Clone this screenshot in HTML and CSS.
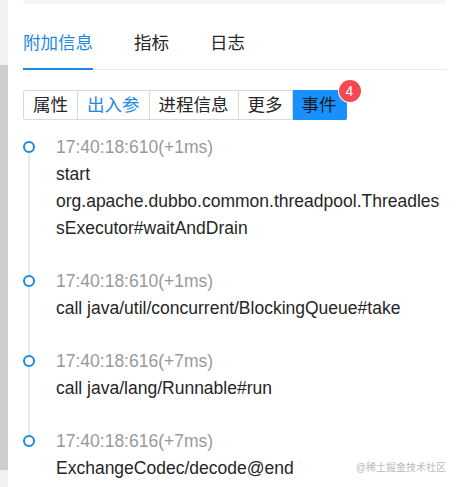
FILE: index.html
```html
<!DOCTYPE html>
<html lang="zh">
<head>
  <meta charset="UTF-8">
  <title>调用详情</title>
  <link rel="stylesheet" href="styles.css">
</head>
<body>
  <div class="page">
    <div class="scrollbar"><div class="scroll-thumb"></div></div>
    <div class="panel">
      <div class="top-card"></div>
      <div class="tabs">
        <div class="tab active">附加信息</div>
        <div class="tab">指标</div>
        <div class="tab">日志</div>
      </div>
      <div class="btn-group">
        <button class="seg-btn">属性</button>
        <button class="seg-btn hover">出入参</button>
        <button class="seg-btn">进程信息</button>
        <button class="seg-btn">更多</button>
        <button class="seg-btn selected">事件<span class="badge">4</span></button>
      </div>
      <ul class="timeline">
        <li class="tl-item">
          <div class="tl-rail"><span class="tl-dot"></span><span class="tl-tail"></span></div>
          <div class="tl-content">
            <div class="tl-time">17:40:18:610(+1ms)</div>
            <div class="tl-text">start org.apache.dubbo.common.threadpool.ThreadlessExecutor#waitAndDrain</div>
          </div>
        </li>
        <li class="tl-item">
          <div class="tl-rail"><span class="tl-dot"></span><span class="tl-tail"></span></div>
          <div class="tl-content">
            <div class="tl-time">17:40:18:610(+1ms)</div>
            <div class="tl-text">call java/util/concurrent/BlockingQueue#take</div>
          </div>
        </li>
        <li class="tl-item">
          <div class="tl-rail"><span class="tl-dot"></span><span class="tl-tail"></span></div>
          <div class="tl-content">
            <div class="tl-time">17:40:18:616(+7ms)</div>
            <div class="tl-text">call java/lang/Runnable#run</div>
          </div>
        </li>
        <li class="tl-item last">
          <div class="tl-rail"><span class="tl-dot"></span></div>
          <div class="tl-content">
            <div class="tl-time">17:40:18:616(+7ms)</div>
            <div class="tl-text">ExchangeCodec/decode@end</div>
          </div>
        </li>
      </ul>
      <div class="watermark">@稀土掘金技术社区</div>
    </div>
  </div>
</body>
</html>
```

FILE: styles.css
```css
body {
  margin: 0;
  background: #fff;
  font-family: 'Liberation Sans', 'Noto Sans CJK SC', Arial, sans-serif;
  color: #262626;
}
.page {
  display: flex;
  height: 487px;
  overflow: hidden;
}
.scrollbar {
  width: 8px;
  flex-shrink: 0;
  background: #f1f1f1;
}
.scroll-thumb {
  margin-top: 65px;
  height: 405px;
  background: #cdcdcd;
}
.panel {
  position: relative;
  flex: 1;
  min-width: 0;
  margin: 0 14px 0 15px;
}
.top-card {
  height: 4px;
  background: #f4f4f4;
  border-radius: 0 0 3px 3px;
}
.tabs {
  display: flex;
  gap: 41px;
  padding-top: 27px;
  border-bottom: 1px solid #e8e8e8;
}
.tab {
  font-size: 17.5px;
  line-height: 24px;
  padding-bottom: 13px;
  border-bottom: 2px solid transparent;
  margin-bottom: -1px;
}
.tab.active {
  color: #1e88e5;
  border-bottom-color: #1e88e5;
}
.btn-group {
  display: flex;
  margin-top: 20px;
}
.seg-btn {
  position: relative;
  font-family: inherit;
  font-size: 17.5px;
  line-height: 28px;
  padding: 0 9px;
  background: #fff;
  color: #262626;
  border: 1px solid #d9d9d9;
  border-left: none;
  cursor: pointer;
}
.seg-btn:first-child {
  border-left: 1px solid #d9d9d9;
  border-radius: 2px 0 0 2px;
}
.seg-btn.hover {
  color: #1e88e5;
}
.seg-btn.selected {
  background: #1890ff;
  border-color: #1890ff;
  border-radius: 0 2px 2px 0;
  color: #1a1a1a;
}
.badge {
  position: absolute;
  top: -11px;
  right: -15px;
  width: 22px;
  height: 22px;
  border-radius: 50%;
  background: #f5474f;
  color: #fff;
  font-size: 14px;
  line-height: 22px;
  text-align: center;
  box-shadow: 0 0 0 1px #fff;
}
.timeline {
  list-style: none;
  margin: 14px 0 0;
  padding: 0;
}
.tl-item {
  display: flex;
}
.tl-rail {
  width: 12px;
  flex-shrink: 0;
  display: flex;
  flex-direction: column;
  align-items: center;
}
.tl-dot {
  margin-top: 7px;
  width: 8px;
  height: 8px;
  border: 2.5px solid #1e88e5;
  border-radius: 50%;
  background: #fff;
}
.tl-tail {
  flex: 1;
  width: 2px;
  background: #e8e8e8;
  margin-bottom: -7px;
}
.tl-content {
  flex: 1;
  min-width: 0;
  margin-left: 21px;
  padding: 0 3px 26px 0;
  font-size: 17.5px;
  line-height: 27px;
}
.tl-time {
  color: #999;
}
.tl-text {
  overflow-wrap: break-word;
  color: #262626;
}
.watermark {
  position: absolute;
  right: 0;
  bottom: 13px;
  font-size: 10px;
  color: #bbb;
}
```
